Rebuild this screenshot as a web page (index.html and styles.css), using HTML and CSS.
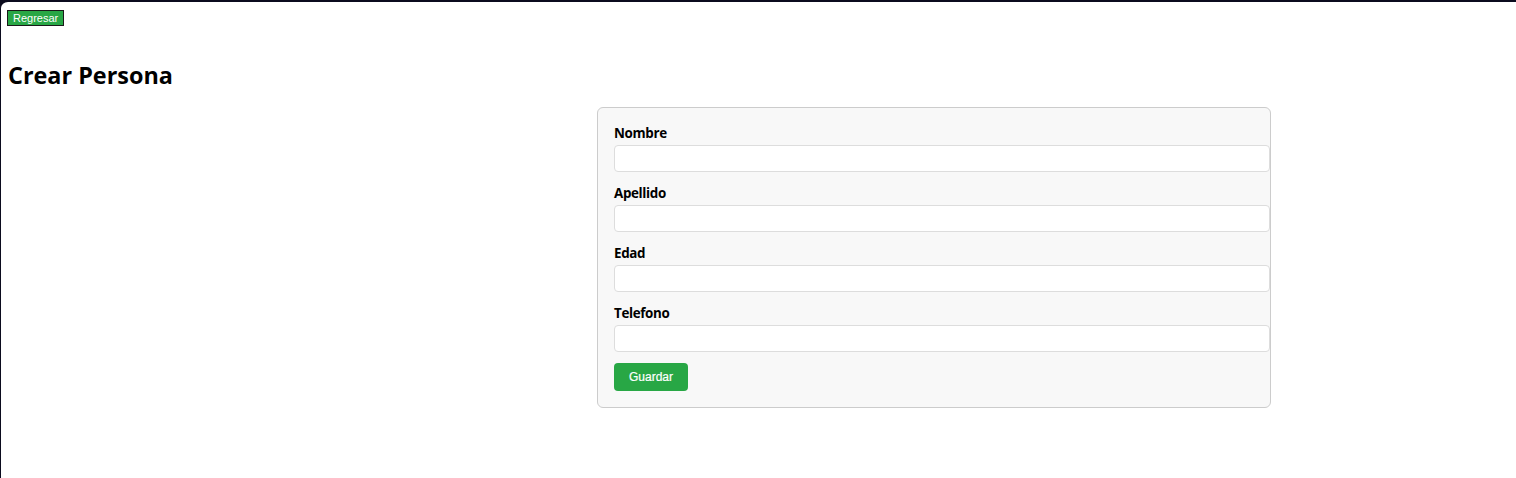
FILE: index.html
```html
<!DOCTYPE html>
<html lang="es">
<head>
<meta charset="utf-8">
<title>Crear Persona</title>
<link rel="stylesheet" href="styles.css">
</head>
<body>
<div class="frame">
  <button class="back-btn" type="button">Regresar</button>
  <h2 class="title">Crear Persona</h2>
  <form class="card">
    <div class="field">
      <label class="label">Nombre</label>
      <input class="input" type="text">
    </div>
    <div class="field">
      <label class="label">Apellido</label>
      <input class="input" type="text">
    </div>
    <div class="field">
      <label class="label">Edad</label>
      <input class="input" type="text">
    </div>
    <div class="field">
      <label class="label">Telefono</label>
      <input class="input" type="text">
    </div>
    <button class="save-btn" type="button">Guardar</button>
  </form>
</div>
</body>
</html>
```

FILE: styles.css
```css
html, body {
  margin: 0;
  padding: 0;
  background: #0b0b1e;
}

.frame {
  box-sizing: border-box;
  min-height: 100vh;
  background: #ffffff;
  border-top: 2px solid #0b0b1e;
  border-left: 1px solid #0b0b1e;
  border-top-left-radius: 8px;
  padding: 8px 6px;
  font-family: "Open Sans", "Noto Sans", sans-serif;
  color: #000;
}

.back-btn {
  display: block;
  box-sizing: border-box;
  height: 16px;
  margin: 0;
  padding: 0 5px;
  background: #28a745;
  color: #fff;
  border: 1px solid #1a1a1a;
  border-radius: 0;
  font-family: "Liberation Sans", Arial, sans-serif;
  font-size: 11px;
  line-height: 13px;
}

.title {
  margin: 33px 0 16px 1px;
  font-size: 23.4px;
  line-height: 32px;
  font-weight: 700;
}

.card {
  box-sizing: border-box;
  width: 674px;
  margin-left: 590px;
  padding: 16px;
  background: #f8f8f8;
  border: 1px solid #cccccc;
  border-radius: 6px;
}

.field {
  margin-bottom: 12px;
}

.label {
  display: block;
  height: 18px;
  margin-bottom: 3px;
  font-size: 13.4px;
  letter-spacing: -0.35px;
  line-height: 18px;
  font-weight: 700;
}

.input {
  display: block;
  box-sizing: content-box;
  width: 100%;
  height: 25px;
  margin: 0;
  padding: 0 7px;
  background: #fff;
  border: 1px solid #dddddd;
  border-radius: 4px;
  font-size: 14px;
}

.save-btn {
  display: block;
  margin-top: -1px;
  height: 28px;
  padding: 0 15px;
  background: #28a745;
  color: #fff;
  border: none;
  border-radius: 4px;
  font-family: "Liberation Sans", Arial, sans-serif;
  font-size: 12px;
  font-weight: 500;
  -webkit-text-stroke: 0.2px #fff;
}
```
